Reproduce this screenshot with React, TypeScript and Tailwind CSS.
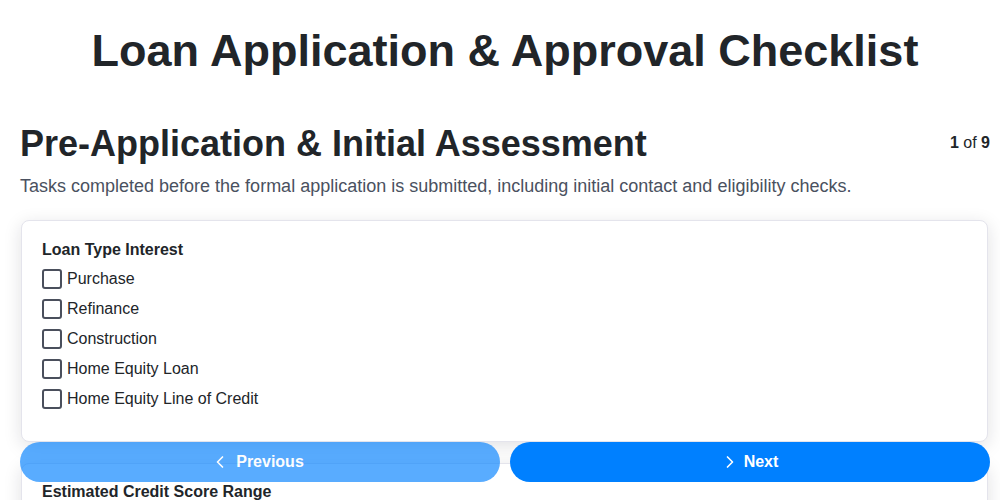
import React from "react";
import { ChevronLeft, ChevronRight } from "lucide-react";

const options = [
  "Purchase",
  "Refinance",
  "Construction",
  "Home Equity Loan",
  "Home Equity Line of Credit",
];

export default function App() {
  return (
    <div
      className="min-h-[500px] bg-white text-[#212529] pl-5 pr-2.5"
      style={{ fontFamily: '"Liberation Sans", Arial, sans-serif' }}
    >
      <h1 className="pt-[24px] text-center text-[45px] font-bold leading-[1.2] text-[#212529]">
        Loan Application &amp; Approval Checklist
      </h1>

      <div className="mt-[44px] flex items-start justify-between">
        <h2 className="text-[36px] font-bold leading-[1.2] text-[#212529]">
          Pre-Application &amp; Initial Assessment
        </h2>
        <div className="mt-[9px] text-[16px] leading-[1.5] text-[#212529]">
          <span className="font-bold">1</span> of <span className="font-bold">9</span>
        </div>
      </div>
      <p className="mt-[8px] text-[18px] leading-[1.5] text-[#4a5160]">
        Tasks completed before the formal application is submitted, including initial contact and eligibility checks.
      </p>

      <div className="ml-px mr-[2px] mt-[20px] h-[222px] rounded-lg border border-[#e4e4ec] bg-white px-5 pt-[17px] shadow-[0_4px_18px_rgba(20,20,40,0.13)]">
        <div className="text-[16px] font-bold leading-[1.5]">Loan Type Interest</div>
        <div className="mt-[5px] flex flex-col gap-[6px]">
          {options.map((o) => (
            <label key={o} className="flex h-6 items-center gap-[5px] text-[16px] leading-6">
              <span className="block h-5 w-5 rounded-[3px] border-2 border-[#4a4f5c] bg-white" />
              <span>{o}</span>
            </label>
          ))}
        </div>
      </div>

      <div className="ml-px mr-[2px] mt-[21px] h-[200px] rounded-lg border border-[#e4e4ec] bg-white px-5 pt-4 shadow-[0_4px_18px_rgba(20,20,40,0.13)]">
        <div className="text-[16px] font-bold leading-[1.5]">Estimated Credit Score Range</div>
      </div>

      <div className="fixed bottom-[18px] left-5 right-2.5 grid grid-cols-2 gap-2.5">
        <button className="flex h-10 items-center justify-center rounded-full bg-[#0080ff] text-[16px] font-bold text-white opacity-65">
          <span className="flex items-center gap-[6px] pr-[6px]">
            <ChevronLeft size={20} strokeWidth={2} />
            Previous
          </span>
        </button>
        <button className="flex h-10 items-center justify-center rounded-full bg-[#0080ff] text-[16px] font-bold text-white">
          <span className="flex items-center gap-[4px] pr-[2px]">
            <ChevronRight size={20} strokeWidth={2} />
            Next
          </span>
        </button>
      </div>
    </div>
  );
}
